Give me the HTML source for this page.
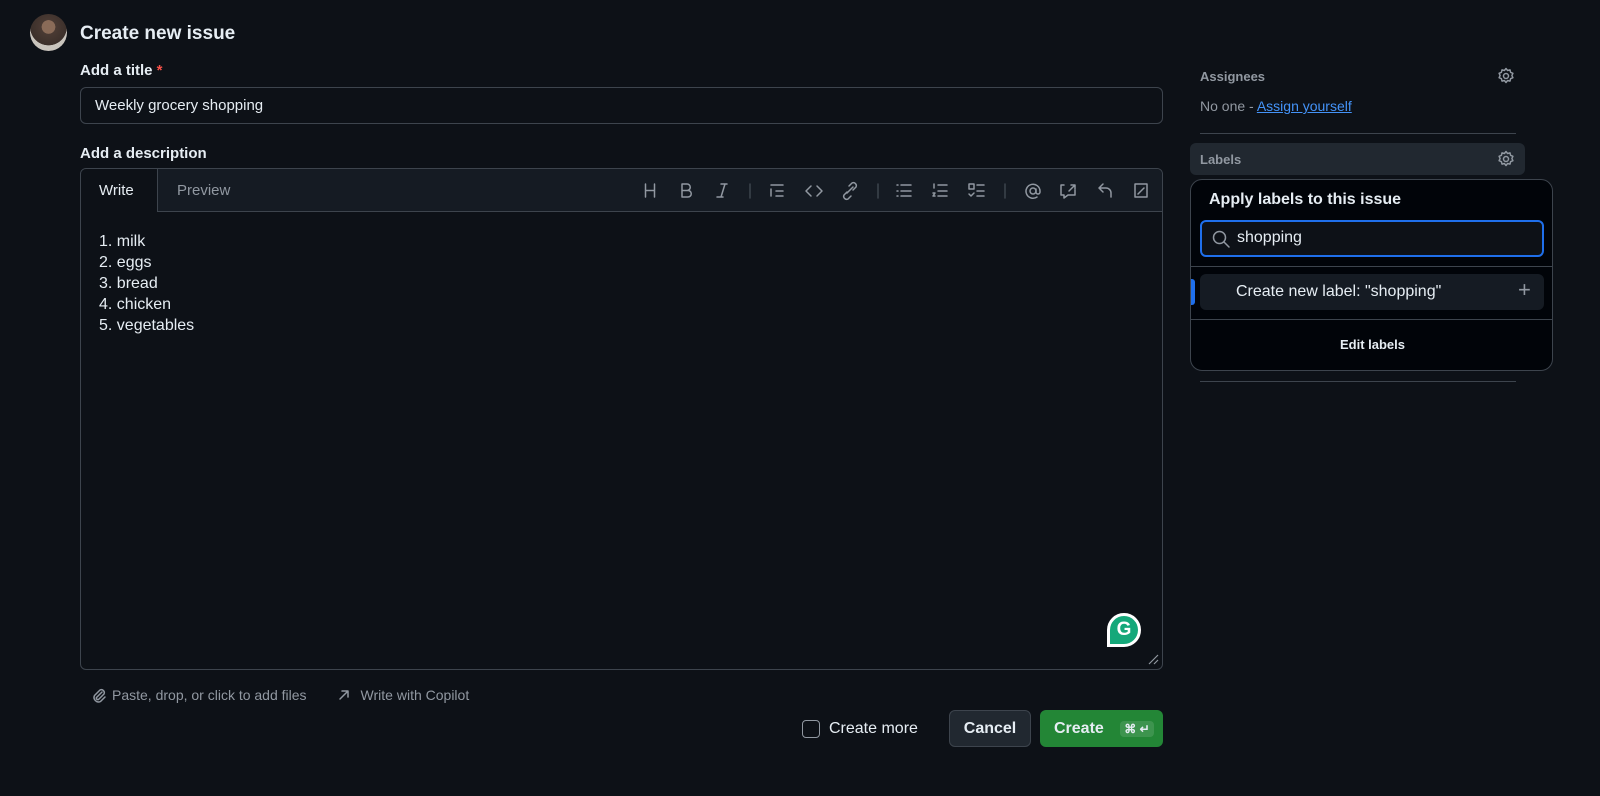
<!DOCTYPE html>
<html><head><meta charset="utf-8"><style>
*{box-sizing:border-box;margin:0;padding:0}
body{width:1600px;height:796px;background:#0d1117;color:#e6edf3;font-family:"Liberation Sans",sans-serif;position:relative;overflow:hidden}
.abs{position:absolute}
.b{font-weight:bold}
svg{display:block}
.ic{stroke:#9198a1;fill:none;stroke-width:1.5;stroke-linecap:round;stroke-linejoin:round}
</style></head><body>
<div class="abs" style="left:30px;top:14px;width:37px;height:37px;border-radius:50%;background:radial-gradient(circle at 50% 35%,#8a6b58 0 22%,#4a3a33 23%,#3c302b 60%,#c9c4bd 61%);"></div>
<div class="abs b" style="left:80px;top:23px;font-size:19px">Create new issue</div>
<div class="abs b" style="left:80px;top:62px;font-size:15px">Add a title <span style="color:#f85149">*</span></div>
<div class="abs" style="left:80px;top:87px;width:1083px;height:37px;border:1px solid #3d444d;border-radius:6px;background:#0d1117;font-size:15px;padding:9px 14px">Weekly grocery shopping</div>
<div class="abs b" style="left:80px;top:145px;font-size:15px">Add a description</div>
<div class="abs" style="left:80px;top:168px;width:1083px;height:502px;border:1px solid #3d444d;border-radius:6px;overflow:hidden">
 <div style="height:43px;background:#151b23;border-bottom:1px solid #3d444d;position:relative">
  <div class="abs" style="left:-1px;top:-1px;width:78px;height:44px;background:#0d1117;border:1px solid #3d444d;border-bottom:none;border-radius:6px 0 0 0;font-size:15px;padding:13px 0 0 18px">Write</div>
  <div class="abs" style="left:96px;top:13px;font-size:15px;color:#9198a1">Preview</div>
  <svg class="abs" style="left:0;top:10px" width="1083" height="24" viewBox="0 0 1083 24">
   <g class="ic">
    <g transform="translate(569 0)"><path d="M-4.5 5v13M4.5 5v13M-4.5 11.5h9"/></g>
    <g transform="translate(605 0)"><path d="M-4 5h5a3.2 3.2 0 010 6.5h-5zM-4 11.5h6a3.2 3.2 0 010 6.5h-6z"/></g>
    <g transform="translate(641 0)"><path d="M-1 5h6M-5 18h6M3 5l-4 13"/></g>
    <path d="M669 5v14" stroke="#3d444d"/>
    <g transform="translate(696 0)"><path d="M-6 6h12M-1 12h7M-1 17h7M-6 10v7"/></g>
    <g transform="translate(733 0)"><path d="M-3 7l-5 5 5 5M3 7l5 5-5 5"/></g>
    <g transform="translate(769 0)"><path d="M-3 13l-3 3a3 3 0 004 4l3-3M3 11l3-3a3 3 0 00-4-4l-3 3M-3 14l6-6"/></g>
    <path d="M797 5v14" stroke="#3d444d"/>
    <g transform="translate(823 0)"><path d="M-7 6h1M-7 12h1M-7 17h1M-3 6h10M-3 12h10M-3 17h10"/></g>
    <g transform="translate(859 0)"><path d="M-6 5v4M-2 6h9M-2 12h9M-2 17h9M-7 14h2l-2 3h2"/></g>
    <g transform="translate(895 0)"><path d="M-7 5h5v5h-5zM1 6h7M1 12h7M1 17h7M-7 15l2 2 3-3"/></g>
    <path d="M924 5v14" stroke="#3d444d"/>
    <g transform="translate(952 0)"><circle cx="0" cy="12" r="3"/><path d="M3 10v3a2 2 0 004 0v-1a7 7 0 10-3 6"/></g>
    <g transform="translate(987 0)"><path d="M-4 6h-3v10h3v3l4-3h7v-5M1 12l6-6M3 6h4v4"/></g>
    <g transform="translate(1024 0)"><path d="M-6 9h7a5 5 0 015 5v4M-6 9l4-4M-6 9l4 4"/></g>
    <g transform="translate(1060 0)"><path d="M-6 5h12v13h-12zM-3 15l6-6"/></g>
   </g>
  </svg>
 </div>
 <div style="padding:19px 18px;font-size:16px;line-height:21px">1. milk<br>2. eggs<br>3. bread<br>4. chicken<br>5. vegetables</div>
 <div class="abs" style="left:1026px;top:444px;width:34px;height:34px;background:#15a87a;border-radius:50% 50% 50% 0;border:3px solid #fff;color:#fff;font-weight:bold;font-size:19px;text-align:center;line-height:28px">G</div>
 <svg class="abs" style="left:1066px;top:484px" width="12" height="12"><path d="M2 11L11 2M7 11l4-4" stroke="#9198a1" stroke-width="1.2"/></svg>
</div>
<div class="abs" style="left:90px;top:686px;font-size:14px;color:#9198a1;display:flex;align-items:center">
 <svg width="18" height="18" viewBox="0 0 18 18"><path class="ic" d="M12 6l-5.5 5.5a1.5 1.5 0 002 2L14 8a3 3 0 00-4-4L4.5 9.5a4.5 4.5 0 006 6L15 11"/></svg>
 <span style="margin-left:4px">Paste, drop, or click to add files</span>
 <svg style="margin-left:30px" width="14" height="14" viewBox="0 0 14 14"><path class="ic" d="M3 11l8-8M5 3h6v6"/></svg>
 <span style="margin-left:10px">Write with Copilot</span>
</div>
<div class="abs" style="left:802px;top:720px;width:18px;height:18px;border:1px solid #9198a1;border-radius:4px"></div>
<div class="abs" style="left:829px;top:720px;font-size:16px">Create more</div>
<div class="abs b" style="left:949px;top:710px;width:82px;height:37px;background:#212830;border:1px solid #3d444d;border-radius:6px;font-size:16px;text-align:center;line-height:35px">Cancel</div>
<div class="abs b" style="left:1040px;top:710px;width:123px;height:37px;background:#238636;border-radius:6px;font-size:16px;line-height:37px;padding-left:14px">Create <span style="font-size:12px;margin-left:12px;background:rgba(255,255,255,.12);padding:1px 4px;border-radius:4px">⌘ ↵</span></div>

<div class="abs b" style="left:1200px;top:69px;font-size:13px;color:#9198a1">Assignees</div>
<svg class="abs" style="left:1497px;top:67px" width="18" height="18" viewBox="0 0 18 18"><g class="ic"><circle cx="9" cy="9" r="2.5"/><path d="M9 1.5l1.6 2 2.4-.6.6 2.4 2.3 1-1 2.2 1 2.2-2.3 1-.6 2.4-2.4-.6-1.6 2-1.6-2-2.4.6-.6-2.4-2.3-1 1-2.2-1-2.2 2.3-1 .6-2.4 2.4.6z"/></g></svg>
<div class="abs" style="left:1200px;top:98px;font-size:14px;color:#9198a1">No one - <span style="color:#4493f8;text-decoration:underline">Assign yourself</span></div>
<div class="abs" style="left:1200px;top:133px;width:316px;height:1px;background:#3d444d"></div>
<div class="abs" style="left:1190px;top:143px;width:335px;height:32px;background:#212830;border-radius:6px"></div>
<div class="abs b" style="left:1200px;top:152px;font-size:13px;color:#9198a1">Labels</div>
<svg class="abs" style="left:1497px;top:150px" width="18" height="18" viewBox="0 0 18 18"><g class="ic"><circle cx="9" cy="9" r="2.5"/><path d="M9 1.5l1.6 2 2.4-.6.6 2.4 2.3 1-1 2.2 1 2.2-2.3 1-.6 2.4-2.4-.6-1.6 2-1.6-2-2.4.6-.6-2.4-2.3-1 1-2.2-1-2.2 2.3-1 .6-2.4 2.4.6z"/></g></svg>
<div class="abs" style="left:1200px;top:381px;width:316px;height:1px;background:#3d444d"></div>
<div class="abs" style="left:1190px;top:179px;width:363px;height:192px;background:#010409;border:1px solid #3d444d;border-radius:12px;overflow:hidden">
 <div class="abs b" style="left:18px;top:11px;font-size:16px">Apply labels to this issue</div>
 <div class="abs" style="left:9px;top:40px;width:344px;height:37px;border:2px solid #1f6feb;border-radius:6px;background:#0d1117"></div>
 <svg class="abs" style="left:20px;top:49px" width="20" height="20" viewBox="0 0 20 20"><g class="ic"><circle cx="8.5" cy="8.5" r="6"/><path d="M13 13l5 5"/></g></svg>
 <div class="abs" style="left:46px;top:49px;font-size:16px">shopping</div>
 <div class="abs" style="left:0;top:86px;width:363px;height:1px;background:#3d444d"></div>
 <div class="abs" style="left:9px;top:94px;width:344px;height:36px;background:#151b23;border-radius:6px"></div>
 <div class="abs" style="left:0;top:99px;width:4px;height:26px;background:#1f6feb;border-radius:0 3px 3px 0"></div>
 <div class="abs" style="left:45px;top:103px;font-size:16px">Create new label: "shopping"</div>
 <div class="abs" style="left:327px;top:97px;font-size:22px;color:#9198a1">+</div>
 <div class="abs" style="left:0;top:139px;width:363px;height:1px;background:#3d444d"></div>
 <div class="abs b" style="left:0;width:363px;top:157px;font-size:13px;text-align:center">Edit labels</div>
</div>
</body></html>
